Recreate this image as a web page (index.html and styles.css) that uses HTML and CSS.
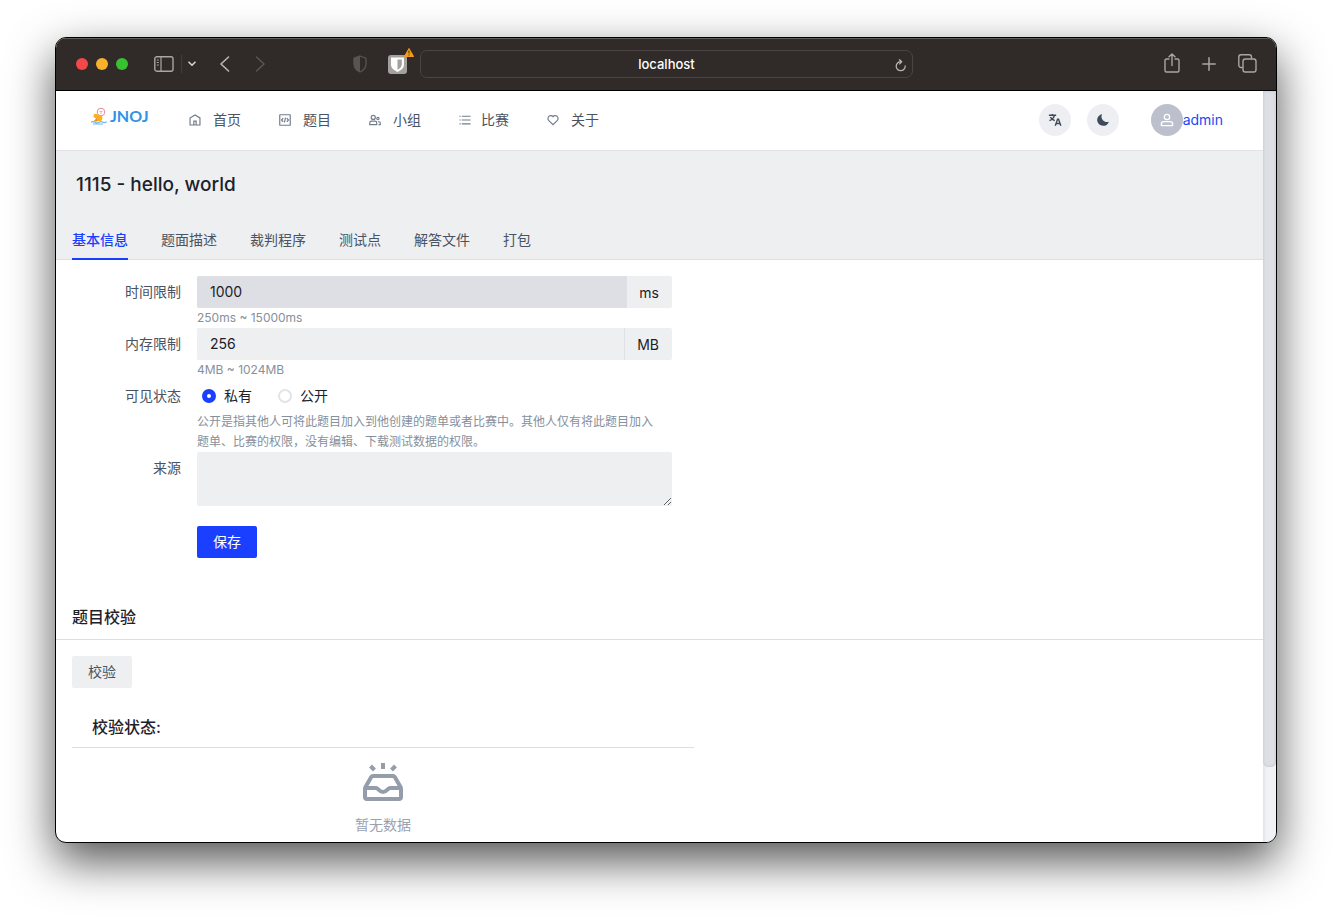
FILE: index.html
```html
<!DOCTYPE html>
<html lang="zh-CN">
<head>
<meta charset="utf-8">
<meta name="viewport" content="width=device-width, initial-scale=1">
<title>1115 - hello, world</title>
<link rel="stylesheet" href="styles.css">
</head>
<body>
<div class="window">
  <div class="toolbar">
    <div class="toolbar-left">
      <div class="lights"><span class="light red"></span><span class="light yellow"></span><span class="light green"></span></div>
      <button class="tool sidebar" aria-label="Sidebar"><svg width="20" height="16" viewBox="0 0 20 16" fill="none" stroke="#aaa6a3" stroke-width="1.4"><rect x=".8" y=".8" width="18.2" height="14.4" rx="2"/><path d="M7 1v14M2.8 4h2M2.8 6.5h2M2.8 9h2" stroke-width="1.2"/></svg></button>
      <span class="separator"></span>
      <button class="tool chevron" aria-label="Tab groups"><svg width="8" height="6" viewBox="0 0 8 6" fill="none" stroke="#d5d2d0" stroke-width="1.6" stroke-linecap="round" stroke-linejoin="round"><path d="M1 1.2 4 4.2l3-3"/></svg></button>
      <button class="tool back" aria-label="Back"><svg width="11" height="16" viewBox="0 0 11 16" fill="none" stroke="#bbb7b4" stroke-width="1.6" stroke-linecap="round" stroke-linejoin="round"><path d="M9.500 1 2 8l7.500 7"/></svg></button>
      <button class="tool" aria-label="Forward"><svg width="11" height="16" viewBox="0 0 11 16" fill="none" stroke="#595451" stroke-width="1.6" stroke-linecap="round" stroke-linejoin="round"><path d="m1.500 1 7.500 7-7.500 7"/></svg></button>
      <button class="tool shield" aria-label="Privacy report"><svg width="14" height="18" viewBox="0 0 14 18"><path d="M7 1 13 3.200V9c0 4-2.500 6.300-6 8-3.500-1.700-6-4-6-8V3.200z" fill="none" stroke="#595451" stroke-width="1.3"/><path d="M7 1v16c-3.500-1.700-6-4-6-8V3.200z" fill="#595451"/></svg></button>
      <button class="tool vault" aria-label="Bitwarden"><svg width="19" height="19" viewBox="0 0 19 19"><rect width="19" height="19" rx="3" fill="#a3a09e"/><path d="M3 2.500h13v7c0 3.500-3 5.800-6.500 7.500C6 15.300 3 13 3 9.500z" fill="#fff"/><path d="M9.500 4.500h4.300v5c0 2.300-1.900 4-4.300 5.300z" fill="#a3a09e"/></svg><svg class="warning" width="10" height="9" viewBox="0 0 10 9"><path d="M5 .5 9.600 8.500H.4z" fill="#f59b1c" stroke="#f59b1c" stroke-linejoin="round"/><path d="M5 2.500v3M5 6.500v1" stroke="#5a3a12" stroke-width="1.100"/></svg></button>
    </div>
    <div class="address"><span>localhost</span><button class="tool reload" aria-label="Reload"><svg width="13" height="13" viewBox="0 0 13 13" fill="none" stroke="#b8b4b1" stroke-width="1.300" stroke-linecap="round" stroke-linejoin="round"><path d="M6.800 2.700A4.500 4.500 0 1 0 11.200 7M5.500.7l2.200 2L5.600 4.900"/></svg></button></div>
    <div class="toolbar-right">
      <button class="tool" aria-label="Share"><svg width="16" height="22" viewBox="0 0 16 22" fill="none" stroke="#aaa6a3" stroke-width="1.400" stroke-linecap="round" stroke-linejoin="round"><path d="M5 6H2.500C1.500 6 1 6.500 1 7.500v10c0 1 .5 1.500 1.500 1.500h11c1 0 1.500-.5 1.500-1.500v-10c0-1-.5-1.500-1.500-1.500H11M8 12.500V1M5 3.800 8 1l3 2.800"/></svg></button>
      <button class="tool" aria-label="New tab"><svg width="14" height="14" viewBox="0 0 14 14" fill="none" stroke="#aaa6a3" stroke-width="1.500" stroke-linecap="round"><path d="M7 .8v12.400M.8 7h12.400"/></svg></button>
      <button class="tool" aria-label="Tab overview"><svg width="19" height="20" viewBox="0 0 19 20" fill="none" stroke="#aaa6a3" stroke-width="1.400"><rect x="5" y="5" width="13" height="13" rx="2.200"/><path d="M4.800 13.500H3A2.200 2.200 0 0 1 .8 11.300V3A2.200 2.200 0 0 1 3 .8h8.300A2.200 2.200 0 0 1 13.500 3v1.800"/></svg></button>
    </div>
  </div>

  <div class="viewport">
    <div class="page">
      <header class="header">
        <a class="logo" href="#"><svg width="18" height="18" viewBox="0 0 18 18"><circle cx="11" cy="5" r="3.800" fill="#fff" stroke="#e58a94"/><path d="M9.500 4.500h3M10 6h2" stroke="#e58a94" stroke-width=".7"/><path d="M3.500 8.500c.5-2 3-2.500 4.500-.5l3.500.5c1.500 1.500 1 4-.5 5.500H6l.5-2.500c-1.500 0-3-1-3-3z" fill="#f9b117"/><path d="m3.500 14.500 3-3.500 1 3.500z" fill="#ef8b22"/><path d="M1 15.200q2-1.200 4 0t4 0 4 0 3.500-.5M3 17h10" fill="none" stroke="#6dbaf0" stroke-width="1.200"/></svg><span>JNOJ</span></a>
        <nav class="menu">
          <a href="#"><svg class="icon" viewBox="0 0 48 48"><path d="M7 17 24 7l17 10v24H7zM20 28h8v13h-8z"/></svg>首页</a>
          <a href="#"><svg class="icon" viewBox="0 0 48 48"><rect x="6" y="6" width="36" height="36" rx="1"/><path d="m18 18-6 6 6 6M30 18l6 6-6 6M26 16l-4 16"/></svg>题目</a>
          <a href="#"><svg class="icon" viewBox="0 0 48 48"><circle cx="18" cy="15" r="7"/><circle cx="34" cy="19" r="4"/><path d="M6 34a6 6 0 0 1 6-6h12a6 6 0 0 1 6 6v6H6zM34 30h4a4 4 0 0 1 4 4v6h-6"/></svg>小组</a>
          <a href="#" class="contest"><svg class="icon" viewBox="0 0 48 48"><path d="M13 24h30M5 11h4M5 24h4M5 37h4M13 11h30M13 37h30"/></svg>比赛</a>
          <a href="#"><svg class="icon" viewBox="0 0 48 48"><path d="M38.300 11.700c-4-3.900-10.600-3.900-14.300 1-3.700-4.900-10.300-4.900-14.300-1-4 4-4 10.500 0 14.500L24 40l14.300-13.800c4-4 4-10.500 0-14.500z"/></svg>关于</a>
        </nav>
        <div class="actions">
          <button class="round" aria-label="语言"><svg width="14" height="14" viewBox="0 0 48 48" fill="none" stroke="#3f4a5a" stroke-width="5"><path d="M3 8h25M15 3v5M5 26c9-3 15-10 17-18M8 14c4 6 8 9 15 12M25 44l8-23h3l8 23M28 36h13"/></svg></button>
          <button class="round" aria-label="主题"><svg width="14" height="14" viewBox="0 0 48 48"><path d="M42.100 29.900C38 31.500 31 31 25.500 26.500 19 21 17 13 20 5.500c.5-1.200-.5-2.200-1.800-1.600C10 7 4 14 4 23.500 4 35 13 44 24.500 44c9 0 16-5 19-12.500.5-1.200-.4-2-1.400-1.600z" fill="#3f4a5a"/></svg></button>
          <a class="user" href="#"><span class="avatar"><svg width="16" height="16" viewBox="0 0 48 48" fill="none" stroke="#fff" stroke-width="4"><circle cx="24" cy="15" r="8"/><path d="M7 37c0-4 3-8 7-8h20c4 0 7 4 7 8v3a1 1 0 0 1-1 1H8a1 1 0 0 1-1-1z"/></svg></span>admin</a>
        </div>
      </header>

      <section class="banner">
        <h1>1115 - hello, world</h1>
        <nav class="tabs">
          <a class="active" href="#">基本信息</a><a href="#">题面描述</a><a href="#">裁判程序</a><a href="#">测试点</a><a href="#">解答文件</a><a href="#">打包</a>
        </nav>
      </section>

      <form class="form">
        <label for="time">时间限制</label>
        <div><div class="group"><input class="focused" id="time" type="text" value="1000"><span class="addon">ms</span></div><p class="help">250ms ~ 15000ms</p></div>
        <label for="memory">内存限制</label>
        <div><div class="group"><input id="memory" type="text" value="256"><span class="addon">MB</span></div><p class="help">4MB ~ 1024MB</p></div>
        <span class="label" id="status">可见状态</span>
        <div><div class="radios" role="radiogroup" aria-labelledby="status"><label><input type="radio" name="status" checked>私有</label><label><input type="radio" name="status">公开</label></div><p class="help">公开是指其他人可将此题目加入到他创建的题单或者比赛中。其他人仅有将此题目加入题单、比赛的权限，没有编辑、下载测试数据的权限。</p></div>
        <label for="source">来源</label>
        <textarea id="source"></textarea>
        <button class="button primary" type="button">保存</button>
      </form>

      <h2>题目校验</h2>
      <section class="verify">
        <button class="button" type="button">校验</button>
        <div class="result">
          <h3>校验状态:</h3>
          <div class="empty">
            <svg width="48" height="48" viewBox="0 0 48 48" fill="none" stroke="#959dac" stroke-width="4"><path d="M24 4v6M32.500 11l4-4M15.500 11l-4-4M6 29h11c2 0 3 4 7 4s5-4 7-4h11M6.500 28l5.700-10q.6-1 1.800-1h20q1.200 0 1.800 1l5.700 10q.5 1 .5 2v8q0 2-2 2H8q-2 0-2-2v-8q0-1 .5-2z"/></svg>
            <p>暂无数据</p>
          </div>
        </div>
      </section>
    </div>
    <div class="scrollbar"><div class="thumb"></div></div>
  </div>
</div>
</body>
</html>
```

FILE: styles.css
```css
* { box-sizing: border-box; }
body {
  margin: 0;
  height: 100vh;
  padding: 37px 55px 73px;
  background: #fff;
  color: #1d2129;
  font: 14px/22px Inter, "Noto Sans CJK SC", sans-serif;
  overflow: hidden;
}
h1, h2, h3, p { margin: 0; font-weight: 500; }
a { color: inherit; text-decoration: none; }
svg { display: block; flex: none; }
button, input, textarea { font: inherit; color: inherit; border: 0; padding: 0; outline: 0; }

.window {
  display: flex;
  flex-direction: column;
  height: 100%;
  overflow: hidden;
  border: 1px solid #000;
  border-radius: 11px;
  background: #fff;
  box-shadow: 0 18px 46px rgba(0, 0, 0, .68);
}
.toolbar {
  display: grid;
  grid-template-columns: 364fr 493fr 363fr;
  align-items: center;
  flex: none;
  height: 53px;
  background: #302a28;
  border-bottom: 1px solid #000;
  box-shadow: inset 0 1px #625e5c;
}
.toolbar-left, .toolbar-right, .lights { display: flex; align-items: center; }
.toolbar-left { padding: 0 13px 0 20px; }
.toolbar-right { justify-content: flex-end; gap: 22px; padding-right: 19px; }
.lights { gap: 8px; margin-right: 26px; }
.light { width: 12px; height: 12px; border-radius: 50%; }
.red { background: #f24848; }
.yellow { background: #f9b02a; }
.green { background: #37c232; }
.tool { background: none; }
.separator { width: 1px; height: 18px; margin: 0 6px 0 7px; background: #423c3a; }
.chevron { margin-right: 23px; }
.back { margin-right: 25px; }
.shield { margin-left: auto; margin-right: 21px; }
.vault { position: relative; }
.warning { position: absolute; top: -7px; right: -7px; }
.address {
  position: relative;
  height: 28px;
  border: 1px solid #4a4543;
  border-radius: 7px;
  color: #fff;
  font-size: 13px;
  font-weight: 500;
  line-height: 27px;
  text-align: center;
}
.reload { position: absolute; right: 5px; top: 8px; }

.viewport { display: flex; flex: 1; min-height: 0; }
.page { flex: 1; min-width: 0; overflow: hidden; }
.scrollbar { flex: none; width: 13px; background: #f1f2f5; box-shadow: inset 2px 0 2px #e4e5e9; }
.thumb { height: 90%; background: #dddfe5; border-radius: 0 0 5px 5px; box-shadow: inset 0 0 3px #bdbfc8; }

.header {
  display: flex;
  align-items: center;
  height: 60px;
  padding: 0 40px 2px 34px;
  border-bottom: 1px solid #e1e3e8;
}
.logo { display: flex; align-items: center; gap: 2px; width: 98px; padding-bottom: 8px; color: #3292e6; font: 700 16px/18px Lato, sans-serif; }
.menu { display: flex; gap: 37px; color: #4a5362; }
.menu a { display: flex; align-items: center; gap: 11px; }
.menu .contest { gap: 9px; }
.icon { width: 14px; height: 14px; fill: none; stroke: #717c8d; stroke-width: 4; }
.actions { display: flex; align-items: center; gap: 16px; margin-left: auto; }
.round, .avatar { display: grid; place-items: center; width: 32px; height: 32px; border-radius: 50%; background: #eeeff2; }
.user { display: flex; align-items: center; margin-left: 16px; color: #1a49f5; }
.avatar { background: #bcc0cc; }

.banner { background: #eeeff1; border-bottom: 1px solid #dcdee4; }
h1 { padding: 20px; font-size: 19px; line-height: 28px; }
.tabs { display: flex; gap: 33px; padding: 0 16px; color: #4a5362; }
.tabs a { padding: 10px 0 7px; border-bottom: 2px solid transparent; margin-bottom: -1px; }
.tabs .active { color: #1a3fff; font-weight: 500; border-color: #1a3fff; }

.form { display: grid; grid-template-columns: 5fr 19fr; max-width: 632px; padding: 16px; }
.form > label, .label { padding-right: 16px; line-height: 32px; text-align: right; color: #4a5362; }
.group { display: flex; height: 32px; border-radius: 2px; overflow: hidden; background: #eeeff1; }
.group input { flex: 1; min-width: 0; padding: 0 13px; background: #eeeff1; }
.group .focused { background: #dedfe5; }
.addon { padding: 0 13px 0 12px; border-left: 1px solid #dfe1e6; line-height: 34px; }
.help { padding-right: 8px; color: #86909c; font-size: 12px; line-height: 20px; font-weight: 400; }
.radios { display: flex; gap: 26px; padding-left: 5px; line-height: 32px; }
.radios label { display: flex; align-items: center; gap: 8px; }
.radios input { appearance: none; width: 14px; height: 14px; margin: 0; border: 2px solid #e3e4ea; border-radius: 50%; }
.radios input:checked { border: 5px solid #1a3fff; }
textarea { display: block; width: 100%; height: 54px; background: #eeeff1; border-radius: 2px; resize: vertical; }
.button { height: 32px; padding: 0 16px; border-radius: 2px; background: #eeeff1; color: #4a5362; }
.primary { grid-column: 2; justify-self: start; margin-top: 20px; background: #1a3fff; color: #fff; }

h2 { margin-top: 20px; padding: 11px 16px 10px; border-bottom: 1px solid #dcdee4; font-size: 16px; line-height: 24px; }
.verify { padding: 16px; }
.result { max-width: 622px; margin-top: 20px; }
h3 { padding: 7px 20px 8px; border-bottom: 1px solid #dcdee4; font-size: 16px; line-height: 24px; }
.empty { display: flex; flex-direction: column; align-items: center; gap: 7px; padding: 11px 0; color: #9aa2b0; }
.empty p { font-weight: 400; }
```
